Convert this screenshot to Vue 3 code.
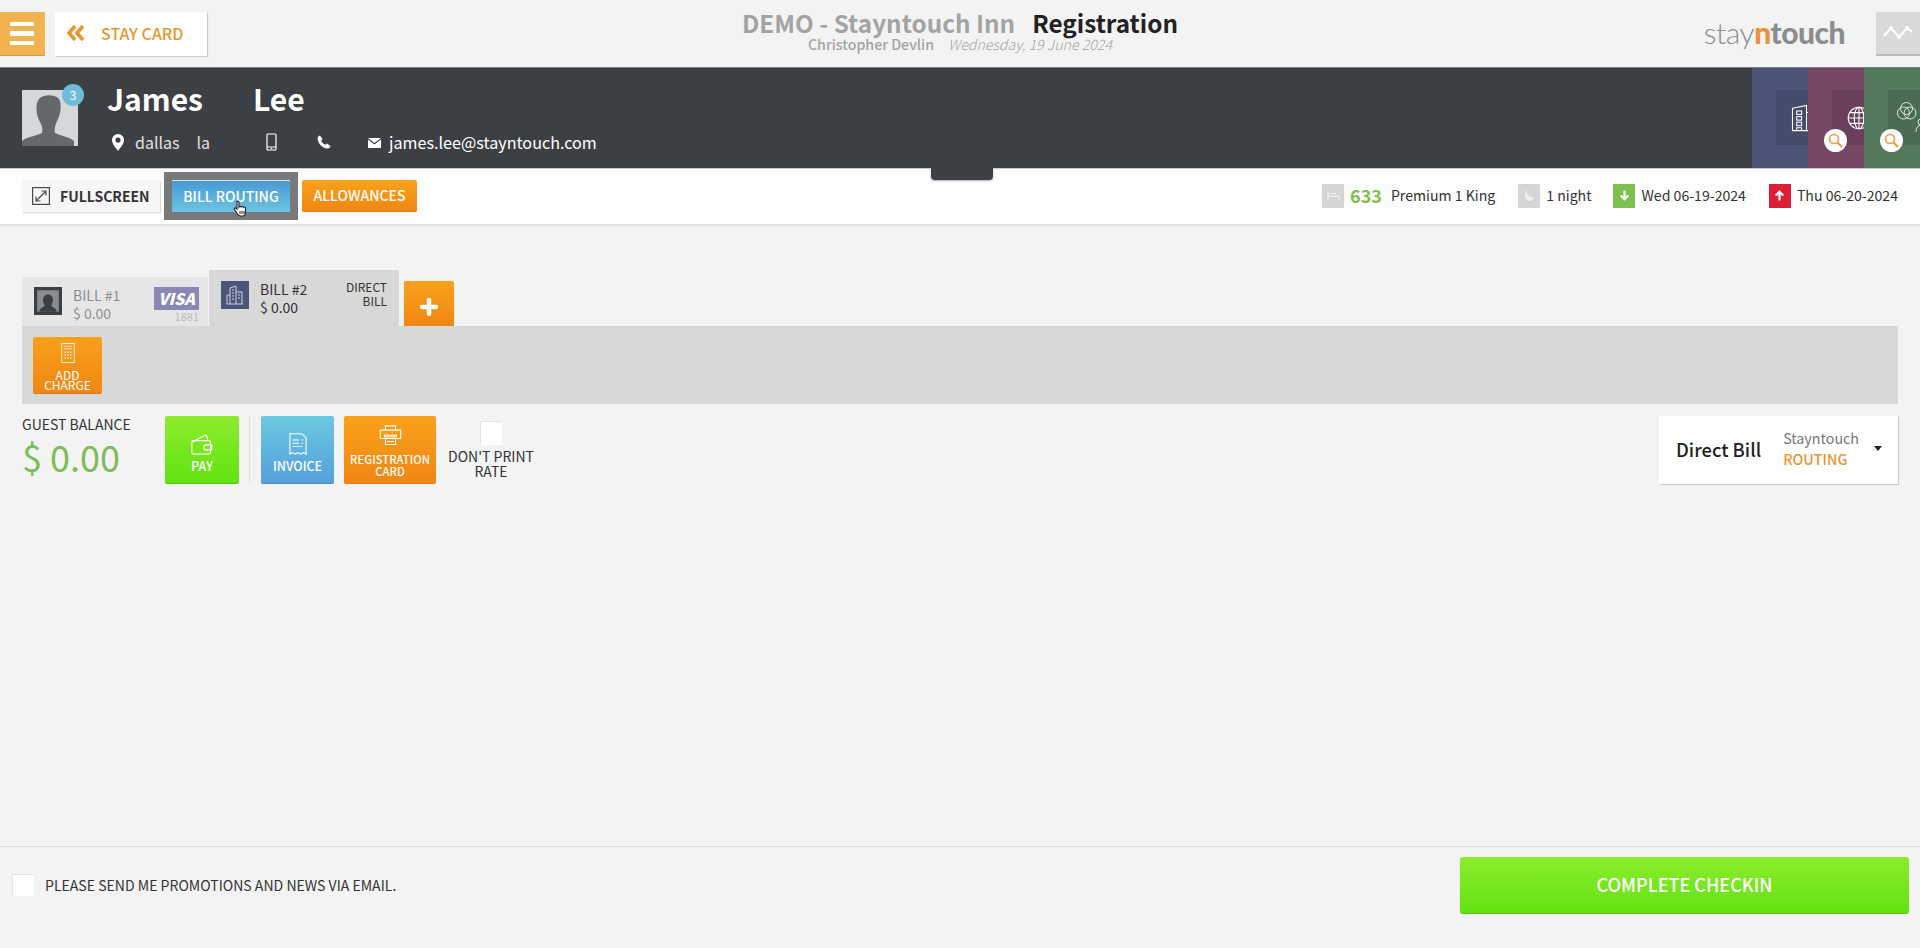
<script setup>
const stays = [
  { id: "checkin", label: "Wed 06-19-2024", tone: "green", d: "M12 4v14M6 12l6 6 6-6" },
  { id: "checkout", label: "Thu 06-20-2024", tone: "red", d: "M12 20V6M6 12l6-6 6 6" },
];
</script>

<template>
  <div class="page">
    <header class="topbar">
      <div class="top-left">
        <button class="menu-btn" aria-label="menu"><i></i><i></i><i></i></button>
        <button class="stay-btn">
          <svg width="20" height="18" viewBox="0 0 20 18"><path d="M9 2 3 9l6 7M17 2l-6 7 6 7" fill="none" stroke="#e9962f" stroke-width="3.6"/></svg>
          <span>STAY CARD</span>
        </button>
      </div>
      <div class="top-title">
        <div class="title-line"><span class="hotel">DEMO - Stayntouch Inn</span><span class="page-name">Registration</span></div>
        <div class="sub-line"><b>Christopher Devlin</b><em>Wednesday, 19 June 2024</em></div>
      </div>
      <div class="top-right">
        <div class="logo"><span class="l1">stay</span><span class="l2">n</span><span class="l3">touch</span></div>
        <button class="graph-btn" aria-label="activity">
          <svg width="32" height="20" viewBox="0 0 32 20"><path d="M2 13 9 5l8 9 8-9 5 4" fill="none" stroke="#fff" stroke-width="2"/><circle cx="9" cy="5" r="2" fill="#fff"/><circle cx="17" cy="14" r="2" fill="#fff"/><circle cx="25" cy="5" r="2" fill="#fff"/></svg>
        </button>
      </div>
    </header>

    <section class="guest">
      <div class="avatar">
        <svg width="56" height="56" viewBox="0 0 56 56">
          <rect width="56" height="56" rx="1" fill="#d6d7d9"/>
          <path d="M0 56V51c4-4 14-5 20-8 1-4 0-7-2-11-4-7-5-18-1-23 4-5 16-5 20 0 3 5 2 15-2 22-2 5-3 8-2 12 6 3 15 4 19 8v5Z" fill="#64676b"/>
        </svg>
        <span class="badge">3</span>
      </div>
      <div class="guest-info">
        <div class="guest-name"><span>James</span><span>Lee</span></div>
        <div class="guest-meta">
          <svg class="pin" width="14" height="17" viewBox="0 0 14 17"><path fill-rule="evenodd" d="M7 0a6 6 0 0 1 6 6c0 4-4 8-6 11C5 14 1 10 1 6a6 6 0 0 1 6-6Zm0 3.5a2.6 2.6 0 1 0 0 5.200a2.600 2.600 0 0 0 0-5.200Z" fill="#fff"/></svg>
          <span class="city">dallas</span>
          <span class="state">la</span>
          <svg class="mobile" width="11" height="18" viewBox="0 0 11 18"><rect x="1" y="1" width="9" height="16" rx="1" fill="none" stroke="#fff" stroke-width="1.200"/><path d="M1 14h9" stroke="#fff" stroke-width="1"/><circle cx="5.500" cy="15.500" r=".8" fill="#fff"/></svg>
          <svg class="phone" width="14" height="14" viewBox="0 0 14 14"><path d="M3 .5 5.500 4 4.200 5.500c.6 2 2 3.500 4.300 4.300L10 8.500l3.500 2.500c-.5 1.800-1.500 2.500-3 2.500C5 13 1 8.500.5 3.500.5 2 1.500 1 3 .5Z" fill="#fff"/></svg>
          <svg class="mail" width="13" height="11" viewBox="0 0 13 11"><path d="M0 1h13L6.500 6ZM0 2.500l6.500 5 6.500-5V11H0Z" fill="#fff"/></svg>
          <span class="email">james.lee@stayntouch.com</span>
        </div>
      </div>
      <div class="panels">
        <div class="panel blue">
          <div class="panel-inner">
            <svg class="panel-icon" width="24" height="28" viewBox="0 0 34 40" fill="none" stroke="#fff" stroke-width="1.500"><path d="M2 6 22 2v36H2Z"/><path d="M22 12h10v26H22"/><rect x="8" y="10" width="7" height="5"/><rect x="8" y="18" width="7" height="5"/><rect x="8" y="26" width="7" height="5"/><path d="M8 38v-4h7v4"/></svg>
          </div>
        </div>
        <div class="panel plum">
          <div class="panel-inner">
            <svg class="panel-icon" width="24" height="24" viewBox="0 0 40 40" fill="none" stroke="#fff" stroke-width="1.800"><circle cx="20" cy="20" r="18"/><ellipse cx="20" cy="20" rx="8" ry="18"/><path d="M20 2v36M4 11h32M2 20h36M4 29h32"/></svg>
          </div>
          <span class="lens"><svg width="15" height="15" viewBox="0 0 15 15" fill="none" stroke="#ee9a45" stroke-width="1.600"><circle cx="6" cy="6" r="4.500"/><path d="m9.500 9.500 4.500 4.500" stroke-width="2.200"/></svg></span>
        </div>
        <div class="panel sage">
          <div class="panel-inner venn">
            <svg class="panel-icon" width="32" height="32" viewBox="0 0 32 32" fill="none" stroke="#dfe9e0" stroke-width="1"><circle cx="9.500" cy="6.500" r="6"/><circle cx="6.500" cy="11" r="6"/><circle cx="13" cy="11" r="6"/><circle cx="24" cy="20" r="3"/><path d="M19 30c0-4 2-7 5-7s5 3 5 7"/></svg>
          </div>
          <span class="lens"><svg width="15" height="15" viewBox="0 0 15 15" fill="none" stroke="#ee9a45" stroke-width="1.600"><circle cx="6" cy="6" r="4.500"/><path d="m9.500 9.500 4.500 4.500" stroke-width="2.200"/></svg></span>
        </div>
      </div>
      <span class="handle"></span>
    </section>

    <nav class="toolbar">
      <div class="tool-left">
        <button class="fullscreen">
          <svg width="18" height="18" viewBox="0 0 18 18" fill="none" stroke="#4a4a4a" stroke-width="1.200"><rect x=".6" y=".6" width="16.800" height="16.800"/><path d="m4 14 10-10M9.500 4H14v4.500M4 9.500V14h4.500"/></svg>
          <span>FULLSCREEN</span>
        </button>
        <div class="focus-ring">
          <button class="routing">BILL ROUTING</button>
          <svg class="cursor" width="16" height="18" viewBox="0 0 16 18"><path d="M4 1.500c1-.8 2 0 2 1V7c.5-.8 1.800-.8 2.200 0 .6-.7 1.800-.6 2.200.3.700-.5 2-.2 2.100.9v4.300c0 2-1.300 3.500-3 3.500H7.500c-1.500 0-2.300-1-3-2L1.500 9.500c-.6-1 .6-2 1.500-1.300L4 9.200Z" fill="#fff" stroke="#222" stroke-width="1.100"/><path d="M7 11v3M9 11v3M11 11v3" stroke="#222" stroke-width="1"/></svg>
        </div>
        <button class="allowances">ALLOWANCES</button>
      </div>
      <div class="tool-right">
        <span class="chip grey"><svg width="13" height="9" viewBox="0 0 14 10" fill="none" stroke="#f1f1f1" stroke-width="1.400"><path d="M1 0v10M1 6h12v4M4 3h6"/></svg></span>
        <span class="room-no">633</span>
        <span class="room-type">Premium 1 King</span>
        <span class="chip grey night-chip"><svg width="11" height="13" viewBox="0 0 12 14"><path d="M3 1c-1 5 2 8 8 8-1 3-3 4-5 4-3 0-5-3-5-6 0-3 1-5 2-6Z" fill="#f1f1f1"/></svg></span>
        <span class="night-label">1 night</span>
        <template v-for="s in stays" :key="s.id">
          <span class="chip" :class="s.tone"><svg width="15" height="15" viewBox="0 0 24 24" fill="none" stroke="#fff" stroke-width="3.500"><path :d="s.d"/></svg></span>
          <span class="stay-date" :class="s.id">{{ s.label }}</span>
        </template>
      </div>
    </nav>

    <main class="content">
      <div class="tabs">
        <div class="tab tab-one">
          <span class="tab-icon dark">
            <svg width="28" height="28" viewBox="0 0 26 26"><rect width="26" height="26" fill="#3c3f43"/><rect x="3" y="3" width="20" height="20" fill="#8a8c8e"/><path d="M5 23c0-4 5-4 5-6-2-2-3-10 3-10s5 8 3 10c0 2 5 2 5 6Z" fill="#3c3f43"/></svg>
          </span>
          <div class="tab-text"><span>BILL #1</span><span>$ 0.00</span></div>
          <div class="visa"><span class="visa-mark">VISA</span><span class="visa-no">1881</span></div>
        </div>
        <div class="tab tab-two">
          <span class="tab-icon navy">
            <svg width="18" height="20" viewBox="0 0 18 20" fill="none" stroke="#cfd2e4" stroke-width="1"><path d="M4 19V3l6-2v18M10 7h6v12M1 19h16M1 19v-9h3"/><path d="M6 5h2M6 8h2M6 11h2M6 14h2M12 10h2M12 13h2"/></svg>
          </span>
          <div class="tab-text"><span>BILL #2</span><span>$ 0.00</span></div>
          <div class="tab-kind">DIRECT<br />BILL</div>
        </div>
        <button class="add-tab" aria-label="add bill">
          <svg width="18" height="18" viewBox="0 0 18 18"><path d="M9 2v14M2 9h14" stroke="#fff" stroke-width="4.500" stroke-linecap="round"/></svg>
        </button>
      </div>
      <div class="bill-strip">
        <button class="add-charge">
          <svg width="14" height="20" viewBox="0 0 16 24" fill="none" stroke="#fff" stroke-width="1"><rect x=".5" y=".5" width="15" height="23"/><path d="M3 4h10M3 7h10"/><path d="M4 11h1.500M7.300 11h1.500M10.500 11h1.500M4 14.500h1.500M7.300 14.500h1.500M10.500 14.500h1.500M4 18h1.500M7.300 18h1.500M10.500 18h1.500" stroke-width="1.800"/></svg>
          <span>ADD<br />CHARGE</span>
        </button>
      </div>

      <div class="bill-actions">
        <div class="balance">
          <span class="balance-label">GUEST BALANCE</span>
          <span class="balance-value">$ 0.00</span>
        </div>
        <button class="action pay">
          <svg width="22" height="22" viewBox="0 0 26 26" fill="none" stroke="#fff" stroke-width="1.300"><path d="M2 10 18 2l2 6"/><rect x="1" y="9" width="22" height="16" rx="2"/><path d="M24.500 14H18a3 3 0 0 0 0 6h6.500Z"/></svg>
          <span>PAY</span>
        </button>
        <span class="action-sep"></span>
        <button class="action invoice">
          <svg width="18" height="22" viewBox="0 0 20 28" preserveAspectRatio="none" fill="none" stroke="#fff" stroke-width="1.200"><path d="M1 1h13l5 5v21l-3-2-3 2-3-2-3 2-3-2-3 2Z"/><path d="M4 9h7M4 13h7M4 17h11M14 9h2M14 13h2"/></svg>
          <span>INVOICE</span>
        </button>
        <button class="action reg-card">
          <svg width="23" height="22" viewBox="0 0 26 26" fill="none" stroke="#fff" stroke-width="1.300"><path d="M7 6V1h12v5M1 6h24v10H20M1 6v10h5"/><rect x="6" y="12" width="14" height="2"/><path d="M7 16h12v7H7ZM9 19.500h8"/></svg>
          <span>REGISTRATION<br />CARD</span>
        </button>
        <div class="no-rate">
          <span class="check"></span>
          <span class="no-rate-label">DON'T PRINT<br />RATE</span>
        </div>
        <div class="routing-card">
          <span class="bill-kind">Direct Bill</span>
          <div class="bill-owner"><span>Stayntouch</span><b>ROUTING</b></div>
          <i class="caret"></i>
        </div>
      </div>
    </main>

    <footer class="footer">
      <label class="promo"><span class="check"></span>PLEASE SEND ME PROMOTIONS AND NEWS VIA EMAIL.</label>
      <button class="complete">COMPLETE CHECKIN</button>
    </footer>
  </div>
</template>

<style>
html,
body {
  margin: 0;
  background: #f3f3f3;
}
</style>

<style scoped>
.page {
  width: 1920px;
  height: 948px;
  display: flex;
  flex-direction: column;
  overflow: hidden;
  background: #f3f3f3;
  color: #333;
  font-family: "Noto Sans CJK SC", "Noto Sans", sans-serif;
  font-size: 14px;
}

button {
  border: 0;
  padding: 0;
  font: inherit;
  cursor: pointer;
}

/* top bar */
.topbar {
  height: 67px;
  flex: none;
  display: grid;
  grid-template-columns: 1fr auto 1fr;
  align-items: start;
}

.top-left {
  display: flex;
  gap: 10px;
  padding-top: 12px;
}

.menu-btn {
  width: 45px;
  height: 44px;
  background: #f0b34f;
  border-bottom: 1px solid #d99a35;
  display: flex;
  flex-direction: column;
  align-items: center;
  justify-content: center;
  gap: 5px;
}

.menu-btn i {
  width: 24px;
  height: 4.5px;
  margin-left: -2px;
  border-radius: 1px;
  background: #fff;
}

.stay-btn {
  width: 152px;
  height: 44px;
  background: #fff;
  box-shadow: 1px 1px 1px #ccc;
  color: #e9962f;
  font-size: 16px;
  font-weight: 500;
  display: flex;
  align-items: center;
  gap: 15px;
  padding: 0 0 2px 11px;
}

.top-title {
  text-align: center;
  padding-top: 8px;
}

.title-line {
  display: flex;
  gap: 17px;
  font-size: 24.3px;
  line-height: 30px;
  font-weight: 700;
}

.hotel {
  color: #a3a3a3;
}

.page-name {
  color: #222;
}

.sub-line {
  display: flex;
  justify-content: center;
  gap: 14px;
  margin-top: -3px;
  font-size: 14.2px;
  line-height: 18px;
  color: #a3a3a3;
}

.sub-line b {
  font-weight: 500;
}

.sub-line em {
  font-weight: 300;
}

.top-right {
  display: flex;
  justify-content: flex-end;
  gap: 31px;
  padding-top: 12px;
}

.logo {
  font-family: Lato, sans-serif;
  font-size: 30px;
  line-height: 40px;
  letter-spacing: -0.5px;
  color: #8b8d8f;
}

.l1 {
  font-weight: 300;
}

.l2 {
  font-weight: 900;
  color: #e8923a;
}

.l3 {
  font-weight: 900;
  color: #8b8d8f;
}

.graph-btn {
  width: 44px;
  height: 44px;
  background: #d9d9d9;
  border-bottom: 2px solid #b9b9b9;
  display: flex;
  align-items: center;
  padding-left: 6px;
}

/* guest header */
.guest {
  position: relative;
  height: 101px;
  flex: none;
  display: flex;
  align-items: flex-start;
  background: #3c3f43;
  border-top: 1px solid #7d8186;
  box-sizing: border-box;
  color: #fff;
}

.avatar {
  position: relative;
  width: 56px;
  height: 56px;
  margin: 22px 0 0 22px;
}

.avatar svg {
  display: block;
}

.badge {
  position: absolute;
  top: -6px;
  right: -6px;
  width: 22px;
  height: 22px;
  border-radius: 50%;
  background: #6fbcd8;
  font-size: 12px;
  line-height: 22px;
  text-align: center;
}

.guest-info {
  margin-left: 29px;
  padding-top: 10px;
}

.guest-name {
  display: flex;
  gap: 50px;
  font-size: 30px;
  line-height: 40px;
  font-weight: 700;
}

.guest-meta {
  display: flex;
  align-items: center;
  margin-top: 12px;
  height: 24px;
  font-size: 16px;
}

.pin {
  margin-left: 4px;
}

.city {
  margin-left: 10px;
  color: #e2e2e2;
}

.state {
  margin-left: 17px;
  color: #e2e2e2;
}

.mobile {
  margin-left: 56px;
}

.phone {
  margin-left: 40px;
}

.mail {
  margin-left: 37px;
}

.email {
  margin-left: 8px;
  font-size: 16.15px;
}

.panels {
  margin-left: auto;
  height: 100%;
  display: flex;
}

.panel {
  position: relative;
  width: 56px;
  height: 100%;
  overflow: hidden;
}

.blue {
  background: #4d5479;
}

.plum {
  background: #774766;
}

.sage {
  background: #54795d;
}

.panel-inner {
  width: 60px;
  height: 55px;
  margin: 22px 0 0 24px;
  background: rgba(0, 0, 0, 0.1);
  display: flex;
  align-items: center;
  padding-left: 15px;
  box-sizing: border-box;
}

.venn {
  padding-left: 9px;
  align-items: flex-start;
  padding-top: 12px;
}

.panel-icon {
  flex: none;
}

.lens {
  position: absolute;
  left: 16px;
  top: 61px;
  width: 23px;
  height: 23px;
  border-radius: 50%;
  background: #fff;
  display: flex;
  align-items: center;
  justify-content: center;
}

.handle {
  position: absolute;
  left: 931px;
  top: 100px;
  width: 62px;
  height: 12px;
  border-radius: 0 0 4px 4px;
  background: #3c3f43;
  box-shadow: 0 1px 2px rgba(0, 0, 0, 0.3);
  z-index: 2;
}

/* toolbar */
.toolbar {
  height: 58px;
  flex: none;
  box-sizing: border-box;
  border-top: 1px solid #c8c9cb;
  border-bottom: 2px solid #e2e2e2;
  background: #fdfdfd;
  display: flex;
  justify-content: space-between;
  align-items: center;
  padding: 0 22px 2px;
}

.tool-left {
  display: flex;
  align-items: center;
}

.fullscreen {
  width: 138px;
  height: 32px;
  background: #f6f6f6;
  box-shadow: 1px 1px 1px #ddd;
  color: #333;
  font-size: 14px;
  font-weight: 700;
  display: flex;
  align-items: center;
  gap: 10px;
  padding-left: 10px;
}

.focus-ring {
  position: relative;
  margin-left: 4px;
  padding: 8px;
  background: #77797c;
}

.routing {
  display: block;
  width: 118px;
  height: 32px;
  background: linear-gradient(#4a9ad4, #6cc3e0);
  border-top: 1px solid #d7e6ef;
  color: #fff;
  font-size: 14px;
  font-weight: 500;
}

.cursor {
  position: absolute;
  left: 69px;
  top: 28px;
}

.allowances {
  margin-left: 4px;
  width: 115px;
  height: 32px;
  border-radius: 2px;
  background: linear-gradient(#f9a11b, #f18613);
  border-bottom: 1px solid #d97a12;
  color: #fff;
  font-size: 14px;
  font-weight: 500;
}

.tool-right {
  display: flex;
  align-items: center;
  height: 24px;
  font-size: 14.1px;
  color: #333;
}

.tool-right > span:not(.chip) {
  padding-bottom: 2px;
}

.chip {
  width: 22px;
  height: 24px;
  display: flex;
  align-items: center;
  justify-content: center;
  flex: none;
}

.grey {
  background: #d5d5d5;
}

.green {
  background: #7cc04f;
}

.red {
  background: #dc1f36;
}

.room-no {
  margin-left: 6px;
  color: #7cc04f;
  font-size: 18px;
  font-weight: 700;
}

.room-type {
  margin-left: 9px;
}

.night-chip {
  margin-left: 23px;
}

.night-label {
  margin-left: 6px;
  margin-right: 22px;
}

.stay-date {
  margin-left: 6px;
}

.stay-date.checkin {
  margin-right: 23px;
}

/* bill */
.content {
  flex: 1;
  padding: 44px 22px 0;
}

.tabs {
  height: 56px;
  display: flex;
  align-items: flex-end;
}

.tab {
  box-sizing: border-box;
  display: flex;
}

.tab-one {
  width: 186px;
  height: 49px;
  margin-right: 1px;
  background: #e6e6e6;
  padding: 10px 9px 0 12px;
  color: #8d8d8d;
}

.tab-two {
  width: 190px;
  height: 56px;
  background: #d8d8d8;
  padding: 11px 12px 0 12px;
  color: #333;
}

.tab-icon {
  flex: none;
  width: 28px;
  height: 28px;
  display: flex;
  align-items: center;
  justify-content: center;
}

.navy {
  background: #4d5479;
}

.tab-text {
  display: flex;
  flex-direction: column;
  margin: -1px 0 0 11px;
  font-size: 14px;
  line-height: 18px;
}

.visa {
  margin-left: auto;
  display: flex;
  flex-direction: column;
  align-items: flex-end;
}

.visa-mark {
  width: 45px;
  height: 23px;
  background: #8a86b6;
  color: #fff;
  font-size: 16px;
  line-height: 23px;
  font-weight: 900;
  font-style: italic;
  text-align: center;
}

.visa-no {
  font-size: 11px;
  line-height: 13px;
  color: #bbb;
}

.tab-kind {
  margin: -1px 0 0 auto;
  text-align: right;
  font-size: 12px;
  line-height: 14px;
}

.add-tab {
  width: 50px;
  height: 45px;
  margin-left: 5px;
  background: linear-gradient(#f9a11b, #f18613);
  border-radius: 2px 2px 0 0;
  display: flex;
  align-items: center;
  justify-content: center;
  padding-top: 6px;
}

.bill-strip {
  height: 78px;
  box-sizing: border-box;
  background: #d8d8d8;
  padding: 11px;
}

.add-charge {
  width: 69px;
  height: 57px;
  border-radius: 2px;
  background: linear-gradient(#f9a11b, #f18613);
  border-bottom: 1px solid #d97a12;
  color: #fff;
  font-size: 12px;
  line-height: 10px;
  display: flex;
  flex-direction: column;
  align-items: center;
  padding-top: 6px;
  box-sizing: border-box;
}

.add-charge span {
  margin-top: 7px;
}

.bill-actions {
  display: flex;
  align-items: flex-start;
  padding-top: 12px;
}

.balance {
  width: 143px;
  display: flex;
  flex-direction: column;
}

.balance-label {
  margin-top: -1px;
  font-size: 14px;
  line-height: 18px;
}

.balance-value {
  margin-top: 2px;
  color: #7dbd57;
  font-size: 36px;
  line-height: 42px;
  font-weight: 400;
}

.action {
  height: 68px;
  border-radius: 2px;
  color: #fff;
  display: flex;
  flex-direction: column;
  align-items: center;
  gap: 5px;
  box-sizing: border-box;
  padding-top: 17px;
  font-size: 12.5px;
  font-weight: 500;
  line-height: 12px;
}

.pay {
  width: 74px;
  background: linear-gradient(#8dec2d, #62e212);
  border-bottom: 1px solid #55c30f;
}

.action-sep {
  width: 1px;
  height: 68px;
  margin: 0 11px 0 10px;
  background: #e2e2e2;
}

.invoice {
  width: 73px;
  background: linear-gradient(#6cc9e0, #559fdb);
  border-bottom: 1px solid #4a8cc2;
}

.reg-card {
  width: 92px;
  margin-left: 10px;
  background: linear-gradient(#f9a11b, #f18613);
  border-bottom: 1px solid #d97a12;
  font-size: 11.3px;
  padding-top: 9px;
  gap: 6px;
}

.no-rate {
  width: 110px;
  display: flex;
  flex-direction: column;
  align-items: center;
  padding-top: 5px;
  line-height: 15px;
  color: #333;
}

.check {
  display: block;
  width: 22px;
  height: 24px;
  background: #fff;
  border-top: 1px solid #e4e4e4;
  border-left: 1px solid #e4e4e4;
  box-sizing: border-box;
  flex: none;
}

.no-rate-label {
  margin-top: 4px;
  text-align: center;
}

.routing-card {
  margin-left: auto;
  width: 239px;
  height: 68px;
  box-sizing: border-box;
  background: #fff;
  box-shadow: 1px 1px 1px #ccc;
  display: flex;
  align-items: center;
  padding: 0 16px 3px 17px;
}

.bill-kind {
  font-size: 18.4px;
  font-weight: 500;
  color: #222;
}

.bill-owner {
  display: flex;
  flex-direction: column;
  margin: -1px 0 0 22px;
  font-size: 14.3px;
  line-height: 21px;
  color: #777;
}

.bill-owner b {
  color: #e9962f;
  font-weight: 500;
}

.caret {
  margin-left: auto;
  width: 0;
  height: 0;
  border: 4.5px solid transparent;
  border-top: 5px solid #222;
  border-bottom: 0;
}

/* footer */
.footer {
  height: 102px;
  flex: none;
  box-sizing: border-box;
  border-top: 1px solid #dedede;
  display: flex;
  justify-content: space-between;
  padding: 10px 11px 0 12px;
}

.promo {
  height: 56px;
  display: flex;
  align-items: center;
  gap: 11px;
  font-size: 14.05px;
  color: #333;
}

.promo .check {
  height: 22px;
}

.complete {
  width: 449px;
  height: 57px;
  border-radius: 3px;
  background: linear-gradient(#8dec2d, #62e212);
  border-bottom: 1px solid #55c30f;
  color: #fff;
  font-size: 18px;
  font-weight: 500;
  padding-bottom: 2px;
}
</style>
